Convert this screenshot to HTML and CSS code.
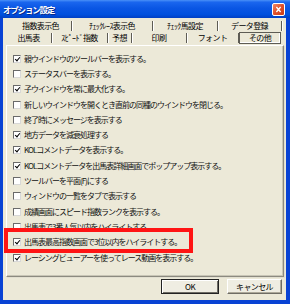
FILE: index.html
```html
<!DOCTYPE html>
<html lang="ja">
<head>
<meta charset="utf-8">
<link rel="stylesheet" href="styles.css">
</head>
<body>
<div class="window">
  <div class="titlebar">
    <span class="title">オプション設定</span>
    <span class="close"><svg viewBox="0 0 12 13" width="12" height="13"><path d="M3.5 3.5 L8.5 9.5 M8.5 3.5 L3.5 9.5" stroke="#fff" stroke-width="1.6" fill="none"/></svg></span>
  </div>
  <div class="frame">
    <div class="body">
      <div class="tabs">
        <div class="tabrow back">
          <span class="tab">指数表示色</span>
          <span class="tab">ﾁｪｯｸﾚｰｽ表示色</span>
          <span class="tab">ﾁｪｯｸ馬設定</span>
          <span class="tab">データ登録</span>
        </div>
        <div class="tabrow front">
          <span class="tab">出馬表</span>
          <span class="tab">ｽﾋﾟｰﾄﾞ指数</span>
          <span class="tab">予想</span>
          <span class="tab">印刷</span>
          <span class="tab">フォント</span>
          <span class="tab selected">その他</span>
        </div>
      </div>
      <div class="panel">
        <ul class="opts">
          <li class="opt"><span class="cb on"></span><span class="label">親ウインドウのツールバーを表示する。</span></li>
          <li class="opt"><span class="cb"></span><span class="label">ステータスバーを表示する。</span></li>
          <li class="opt"><span class="cb on"></span><span class="label">子ウインドウを常に最大化する。</span></li>
          <li class="opt"><span class="cb"></span><span class="label">新しいウインドウを開くとき直前の同種のウインドウを閉じる。</span></li>
          <li class="opt"><span class="cb"></span><span class="label">終了時にメッセージを表示する</span></li>
          <li class="opt"><span class="cb on"></span><span class="label">地方データを減衰処理する</span></li>
          <li class="opt"><span class="cb on"></span><span class="label">KOLコメントデータを表示する。</span></li>
          <li class="opt"><span class="cb on"></span><span class="label">KOLコメントデータを出馬表詳細画面でポップアップ表示する。</span></li>
          <li class="opt"><span class="cb"></span><span class="label">ツールバーを平面(F)にする</span></li>
          <li class="opt"><span class="cb"></span><span class="label">ウィンドウの一覧をタブで表示する</span></li>
          <li class="opt"><span class="cb"></span><span class="label">成績画面にスピード指数ランクを表示する。</span></li>
          <li class="opt"><span class="cb"></span><span class="label">出馬表で3番人気以内をハイライトする。</span></li>
          <li class="opt"><span class="cb on"></span><span class="label">出馬表最高指数画面で3位以内をハイライトする。</span></li>
          <li class="opt"><span class="cb on"></span><span class="label">レーシングビューアーを使ってレース動画を表示する。</span></li>
        </ul>
      </div>
      <div class="buttons">
        <button class="btn default">OK</button>
        <button class="btn">キャンセル</button>
      </div>
    </div>
  </div>
  <div class="highlight"></div>
</div>
</body>
</html>
```
FILE: styles.css
```css
* { box-sizing: border-box; }
html, body { margin: 0; padding: 0; background: #fff; }
body { font-family: "Noto Sans CJK JP", "Noto Sans", sans-serif; }

.window {
  position: relative;
  width: 290px;
  height: 304px;
  display: flex;
  flex-direction: column;
  background: #0842d4;
}

.titlebar {
  height: 18px;
  flex: none;
  display: flex;
  align-items: center;
  justify-content: space-between;
  padding: 0 5px 0 3px;
  background: linear-gradient(#4a90f8 0%, #1a66ee 12%, #0a56e4 45%, #0050de 80%, #0040c4 100%);
}
.title {
  color: #fff;
  font-size: 8.5px;
  font-weight: bold;
  letter-spacing: -1.2px;
  text-shadow: 1px 1px 0 #0a2a8a;
  line-height: 1;
}
.close {
  width: 13px;
  height: 13px;
  border: 1px solid #fff;
  border-radius: 2px;
  background: linear-gradient(135deg, #f08a6a, #e0502a 50%, #c83a18);
  display: flex;
  align-items: center;
  justify-content: center;
}
.close svg { display: block; width: 11px; height: 11px; }

.frame {
  flex: 1;
  padding: 0 4px 4px 3px;
  display: flex;
}
.body {
  flex: 1;
  background: #ece9d8;
  display: flex;
  flex-direction: column;
}

.tabs {
  padding-top: 2px;
  height: 27px;
  font-size: 8px;
  letter-spacing: -0.6px;
  color: #000;
}
.tabrow {
  display: grid;
  height: 12px;
  line-height: 12px;
  text-align: center;
}
.tabrow.back {
  margin-left: 7px;
  width: 272px;
  grid-template-columns: 62px 81px 65px 64px;
}
.tabrow.front {
  margin-left: 3px;
  width: 275px;
  grid-template-columns: 46px 56px 24px 55px 52px 42px;
}
.tab {
  white-space: nowrap;
  border-right: 1px solid #5e5c54;
  box-shadow: 1px 0 0 #fff;
  margin: 1px 0;
  line-height: 10px;
}
.tab.selected {
  border: 1px solid #5e5c54;
  box-shadow: inset -1px -1px 0 #fff;
  margin: 0;
}

.panel {
  margin: 0 2px 0 3px;
  height: 232px;
  border-top: 1px solid #fff;
  border-left: 1px solid #fff;
  border-right: 1px solid #8c8a80;
  border-bottom: 1px solid #8c8a80;
  box-shadow: 1px 1px 0 #e2dfd0, inset -1px -1px 0 #c8c5b6;
  padding: 5px 0 0 6px;
}
.opts {
  list-style: none;
  margin: 0;
  padding: 0;
}
.opt {
  height: 15.3px;
  display: flex;
  align-items: center;
  gap: 3px;
}
.cb {
  flex: none;
  width: 8px;
  height: 8px;
  background: #fff;
  border-top: 1px solid #6a6a6a;
  border-left: 1px solid #6a6a6a;
  border-right: 1px solid #d8d8d8;
  border-bottom: 1px solid #d8d8d8;
  position: relative;
}
.cb.on::after {
  content: "";
  position: absolute;
  left: 2px;
  top: 0;
  width: 2px;
  height: 4px;
  border-right: 1.5px solid #000;
  border-bottom: 1.5px solid #000;
  transform: rotate(40deg);
  transform-origin: center;
}
.label {
  font-size: 8px;
  letter-spacing: -1px;
  white-space: nowrap;
  color: #111;
  line-height: 1;
}

.buttons {
  display: flex;
  justify-content: flex-end;
  gap: 8px;
  padding: 2px 4px 0 0;
}
.btn {
  font-family: inherit;
  font-size: 8px;
  letter-spacing: -0.6px;
  color: #000;
  height: 15px;
  padding: 0;
  background: #efede2;
  border: 1px solid;
  border-color: #fff #6e6c64 #6e6c64 #fff;
  box-shadow: inset -1px -1px 0 #aca899;
  border-radius: 0;
  width: 55px;
  line-height: 1;
}
.btn.default {
  width: 58px;
  border: 1px solid #222;
  box-shadow: inset 1px 1px 0 #fff, inset -1px -1px 0 #6e6c64;
}

.highlight {
  position: absolute;
  left: 4px;
  top: 228px;
  width: 189px;
  height: 25px;
  border: 4px solid #ff1414;
}
```
